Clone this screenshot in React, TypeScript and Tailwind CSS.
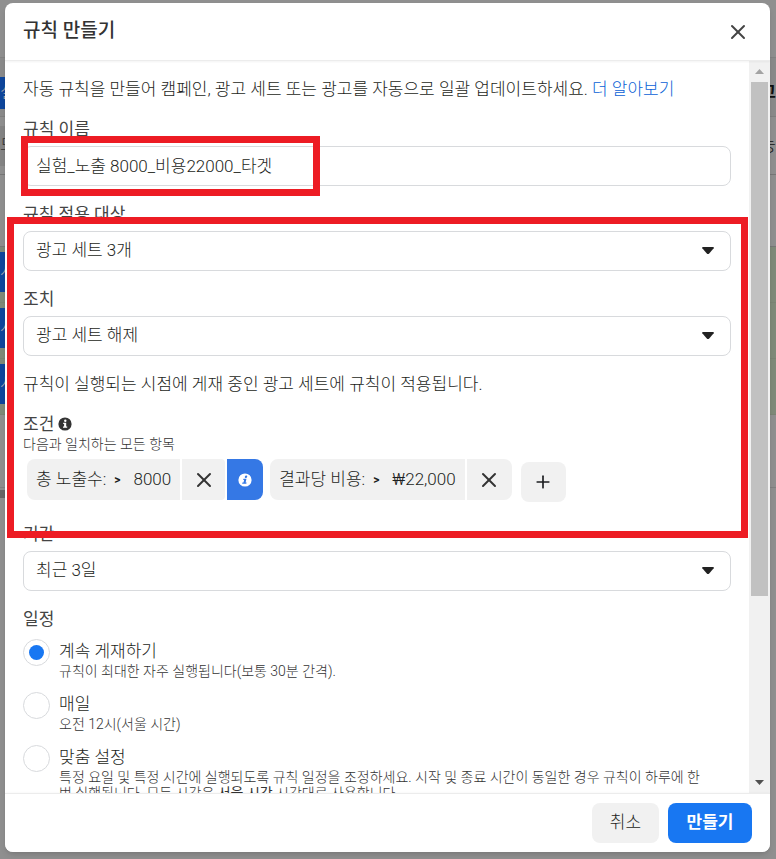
import { Plus, X } from "lucide-react";
import type { ReactNode } from "react";

const SCHEDULES = [
  {
    id: "always",
    title: "계속 게재하기",
    body: "규칙이 최대한 자주 실행됩니다(보통 30분 간격).",
  },
  { id: "daily", title: "매일", body: "오전 12시(서울 시간)" },
  {
    id: "custom",
    title: "맞춤 설정",
    body: (
      <>
        특정 요일 및 특정 시간에 실행되도록 규칙 일정을 조정하세요. 시작 및 종료 시간이 동일한 경우 규칙이 하루에 한
        <br />번 실행됩니다. 모든 시간은 <b>서울 시간</b> 시간대로 사용합니다.
      </>
    ),
  },
];

function Label({ htmlFor, children }: { htmlFor: string; children: ReactNode }) {
  return (
    <label htmlFor={htmlFor} className="mb-[5px] block text-[17px] leading-6 font-normal text-[#444]">
      {children}
    </label>
  );
}

function SelectField({ id, label, value }: { id: string; label: string; value: string }) {
  return (
    <div>
      <Label htmlFor={id}>{label}</Label>
      <div className="relative">
        <select
          id={id}
          className="block h-10 w-full appearance-none rounded-lg border border-[#d8dadd] bg-white px-3 text-[17px]"
        >
          <option>{value}</option>
        </select>
        <svg viewBox="0 0 12 8" className="pointer-events-none absolute top-4 right-[17px] h-2 w-3 fill-[#222]">
          <path d="M1 0h10q1.3 0 .7 1.2L7.2 6.4q-1.2 1.2-2.4 0L.3 1.2Q-.3 0 1 0Z" />
        </svg>
      </div>
    </div>
  );
}

function InfoIcon({ className, hole, italic }: { className: string; hole: string; italic?: boolean }) {
  return (
    <svg viewBox="0 0 14 14" className={className}>
      <circle cx="7" cy="7" r="6.6" fill="currentColor" />
      <g fill={hole} transform={italic ? "translate(1.6 0) skewX(-13)" : undefined}>
        <circle cx="7.3" cy="3.8" r="1.2" />
        <path d="M5.2 5.8h3v3.7h1v1.2H5v-1.2h1.1V7h-.9Z" />
      </g>
    </svg>
  );
}

function Condition({ name, value, info }: { name: string; value: string; info?: boolean }) {
  return (
    <div className="flex h-[41px] gap-0.5 overflow-hidden rounded-lg">
      <div className="flex items-center bg-[#f1f1f1] px-[9px] text-[17px]">
        <span>{name}</span>
        <span className="mx-2 text-xs font-bold">&gt;</span>
        <span className="pl-[5px]">{value}</span>
      </div>
      <button
        aria-label="삭제"
        className={
          info
            ? "flex w-[43px] items-center justify-center rounded-r-sm bg-[#f1f1f1]"
            : "flex w-[45px] items-center justify-center bg-[#f1f1f1]"
        }
      >
        <X size={24} strokeWidth={2} className="text-[#333]" />
      </button>
      {info && (
        <button aria-label="정보" className="flex w-9 items-center justify-center bg-[#3578e5] text-white">
          <InfoIcon className="h-3.5 w-3.5" hole="#3578e5" italic />
        </button>
      )}
    </div>
  );
}

// Dimmed page behind the dialog
function Backdrop() {
  return (
    <div aria-hidden="true" className="absolute inset-0 flex flex-col overflow-hidden bg-[#8f8f8f] text-[17px]">
      <div className="h-[58px] shrink-0 border-b border-[#828282]" />
      <div className="flex h-[59px] shrink-0 items-center justify-between border-b border-[#7f7f7f] bg-[#8a8a8a] pt-3">
        <span className="flex h-8 w-10 items-center bg-[#0f469c] text-[#b5b5b5]">실</span>
        <span className="font-bold text-[#111]">고</span>
      </div>
      <div className="flex h-[58px] shrink-0 items-center justify-between border-b border-[#777]">
        <span className="flex h-10 w-10 items-center bg-[#848484] text-[#333]">드</span>
        <span className="text-[#111]">능</span>
      </div>
      <div className="h-[72px] shrink-0 border-b border-[#777]" />
      {[0, 1, 2].map((row) => (
        <div key={row} className="h-14 shrink-0 border-b border-[#7a8474] bg-[#7f8a79] pt-[5px]">
          <span className="flex h-10 w-10 items-center bg-[#0f469c] text-[#b5b5b5]">시</span>
        </div>
      ))}
      <div className="h-[73px] shrink-0 border-b border-[#808080]" />
      <div className="mt-0.5 h-2 w-10 shrink-0 bg-[#666]" />
    </div>
  );
}

export default function App() {
  return (
    <div className="relative flex h-screen flex-col pt-[3px] pr-1.5 pb-[7px] pl-[5px] font-['Roboto','Noto_Sans_CJK_KR',sans-serif] font-light text-[#1c1e21]">
      <Backdrop />
      <div className="relative flex min-h-0 flex-1 flex-col overflow-hidden rounded-lg bg-white shadow-md">
        <header className="z-10 flex h-[58px] shrink-0 items-center justify-between border-b border-[#ececec] pr-5 pl-[18px] shadow-xs">
          <h1 className="text-[19px] font-medium text-[#333]">규칙 만들기</h1>
          <button aria-label="닫기">
            <X size={24} className="text-[#444]" />
          </button>
        </header>

        <div className="flex min-h-0 flex-1">
          <main className="flex min-w-0 flex-1 flex-col gap-4 overflow-hidden px-[18px] pt-4">
            <p className="text-[17px] leading-6">
              자동 규칙을 만들어 캠페인, 광고 세트 또는 광고를 자동으로 일괄 업데이트하세요.{" "}
              <a href="#more" className="text-[#0a5fd6]">더 알아보기</a>
            </p>
            <div>
              <Label htmlFor="name">규칙 이름</Label>
              <input
                id="name"
                defaultValue="실험_노출 8000_비용22000_타겟"
                className="block h-10 w-full rounded-lg border border-[#d8dadd] px-3 pb-1 text-[17px]"
              />
            </div>
            <SelectField id="target" label="규칙 적용 대상" value="광고 세트 3개" />
            <SelectField id="action" label="조치" value="광고 세트 해제" />
            <p className="text-[17px] leading-6">규칙이 실행되는 시점에 게재 중인 광고 세트에 규칙이 적용됩니다.</p>
            <section className="pb-1">
              <h2 className="flex items-center gap-1 text-[17px] leading-6 font-normal text-[#444]">
                조건 <InfoIcon className="h-3.5 w-3.5 text-[#333]" hole="#fff" />
              </h2>
              <p className="text-sm leading-4 text-[#333]">다음과 일치하는 모든 항목</p>
              <div className="mt-[7px] flex gap-[7px] pl-1">
                <Condition name="총 노출수:" value="8000" info />
                <Condition name="결과당 비용:" value="₩22,000" />
                <button
                  aria-label="추가"
                  className="mt-[3px] ml-0.5 flex h-10 w-[45px] items-center justify-center rounded-lg bg-[#f1f1f1]"
                >
                  <Plus size={20} strokeWidth={2} />
                </button>
              </div>
            </section>
            <SelectField id="range" label="기간" value="최근 3일" />
            <fieldset>
              <legend className="mb-2 text-[17px] leading-6 font-normal text-[#444]">일정</legend>
              <div className="flex flex-col gap-[13px]">
                {SCHEDULES.map((s, i) => (
                  <div key={s.id} className="flex gap-[9px]">
                    <input
                      type="radio"
                      id={s.id}
                      name="schedule"
                      defaultChecked={i === 0}
                      className="h-[27px] w-[27px] shrink-0 appearance-none rounded-full border border-[#d8dadd] bg-white bg-clip-content p-[5px] checked:bg-[#1877f2]"
                    />
                    <label htmlFor={s.id} className="min-w-0">
                      <span className="block text-[17px] leading-6">{s.title}</span>
                      <span className="block text-sm leading-4 whitespace-nowrap text-[#333]">{s.body}</span>
                    </label>
                  </div>
                ))}
              </div>
            </fieldset>
          </main>

          <div className="flex w-[21px] shrink-0 flex-col items-center bg-[#f1f1f1]">
            <svg viewBox="0 0 9 5" className="my-2 h-[5px] w-[9px] shrink-0 fill-[#a3a3a3]">
              <path d="M0 5h9L4.5 0Z" />
            </svg>
            <div className="flex min-h-0 w-full flex-1 justify-center">
              <div className="h-[74.5%] w-[17px] bg-[#c1c1c1]" />
            </div>
            <svg viewBox="0 0 9 5" className="my-2 h-[5px] w-[9px] shrink-0 fill-[#505050]">
              <path d="M0 0h9L4.5 5Z" />
            </svg>
          </div>
        </div>

        <footer className="z-10 flex h-[59px] shrink-0 items-center justify-end gap-[9px] border-t border-[#ececec] bg-white pr-[18px] shadow">
          <button className="h-10 w-[67px] rounded-lg bg-[#f1f1f1] text-[17px]">취소</button>
          <button className="h-10 w-[84px] rounded-lg bg-[#1877f2] text-[17px] font-bold text-white">만들기</button>
        </footer>
      </div>

      <div className="pointer-events-none absolute top-[136px] left-[21px] z-20 h-[60px] w-[299px] border-[7px] border-[#ed1c24]" />
      <div className="pointer-events-none absolute top-[217px] right-7 left-[7px] z-20 h-[321px] border-[7px] border-[#ed1c24]" />
    </div>
  );
}
